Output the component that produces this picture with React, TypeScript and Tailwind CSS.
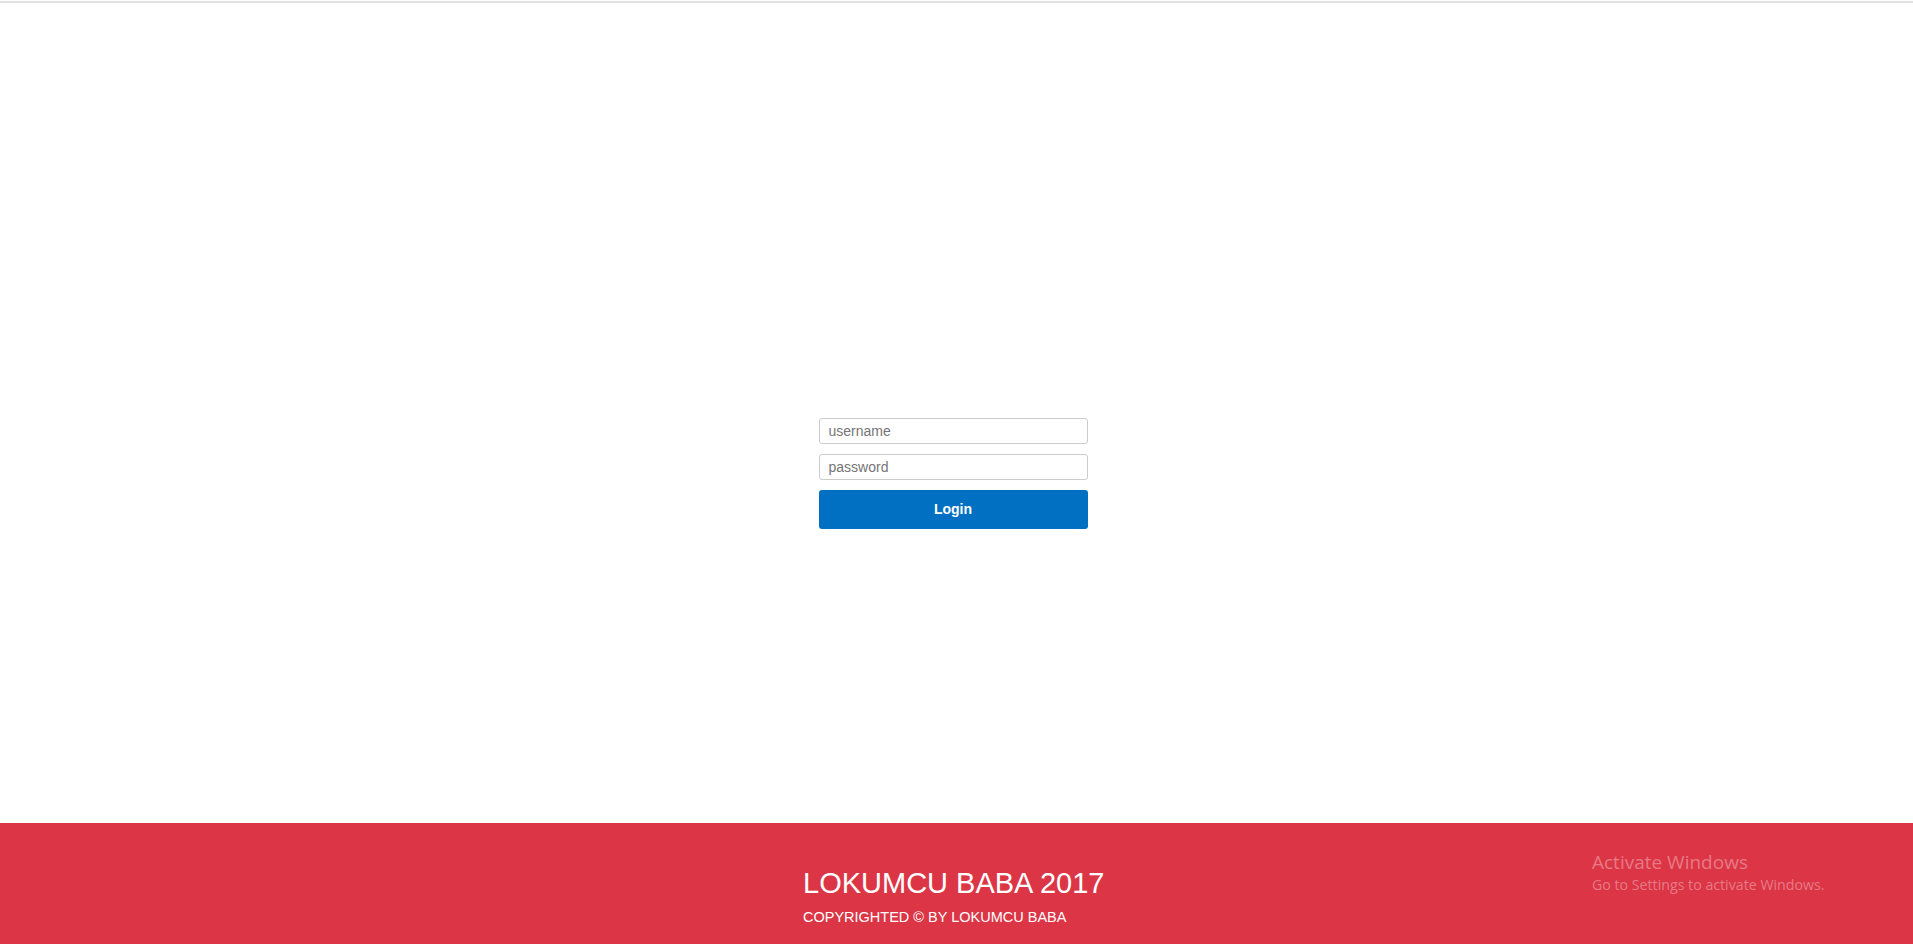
import { useState } from "react";

export default function App() {
  const [username, setUsername] = useState("");
  const [password, setPassword] = useState("");

  return (
    <div className="relative flex h-[944px] flex-col bg-white font-['Liberation_Sans',Arial,sans-serif]">
      <div className="h-px bg-white" />
      <div className="h-[2px] bg-[#e1e1e1]" />

      <main className="flex flex-1 items-start justify-center pr-[7px] pt-[415px]">
        <form className="flex w-[269px] flex-col" onSubmit={(e) => e.preventDefault()}>
          <input
            type="text"
            placeholder="username"
            value={username}
            onChange={(e) => setUsername(e.target.value)}
            className="h-[26px] rounded-[3px] border border-[#cccccc] px-[9px] text-[14px] text-[#555] outline-none placeholder:text-[#757575]"
          />
          <input
            type="password"
            placeholder="password"
            value={password}
            onChange={(e) => setPassword(e.target.value)}
            className="mt-[10px] h-[26px] rounded-[3px] border border-[#cccccc] px-[9px] text-[14px] text-[#555] outline-none placeholder:text-[#757575]"
          />
          <button
            type="submit"
            className="mt-[10px] h-[39px] rounded-[3px] bg-[#0170c2] text-[14px] font-bold text-white"
          >
            Login
          </button>
        </form>
      </main>

      <footer className="h-[121px] bg-[#dc3546] pl-[803px] pt-[42px] text-white">
        <h1 className="text-[29px] leading-[36px]">LOKUMCU BABA 2017</h1>
        <p className="mt-[8px] text-[14.5px] leading-[17px]">COPYRIGHTED © BY LOKUMCU BABA</p>
      </footer>

      <div className="pointer-events-none absolute left-[1592px] top-[849px] font-['Open_Sans',sans-serif] text-white/35">
        <div className="text-[19px] leading-[26px]">Activate Windows</div>
        <div className="text-[14.2px] leading-[19px]">Go to Settings to activate Windows.</div>
      </div>
    </div>
  );
}
